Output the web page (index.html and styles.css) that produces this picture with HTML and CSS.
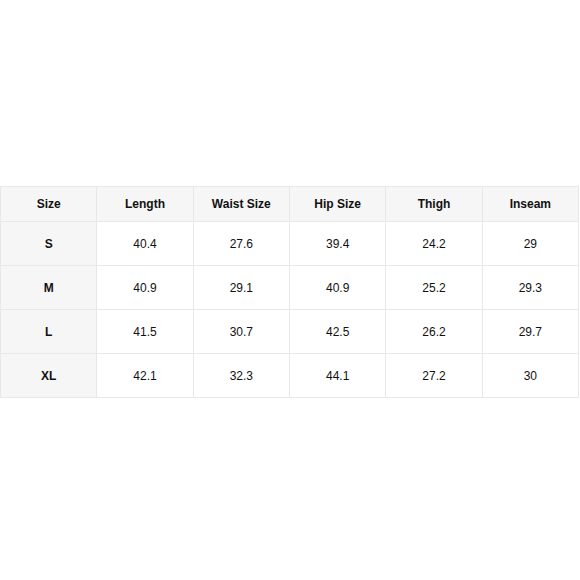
FILE: index.html
```html
<!DOCTYPE html>
<html>
<head>
<meta charset="utf-8">
<link rel="stylesheet" href="styles.css">
</head>
<body>
<div class="page">
<table class="chart">
  <thead>
    <tr><th>Size</th><th>Length</th><th>Waist Size</th><th>Hip Size</th><th>Thigh</th><th>Inseam</th></tr>
  </thead>
  <tbody>
    <tr><th>S</th><td>40.4</td><td>27.6</td><td>39.4</td><td>24.2</td><td>29</td></tr>
    <tr><th>M</th><td>40.9</td><td>29.1</td><td>40.9</td><td>25.2</td><td>29.3</td></tr>
    <tr><th>L</th><td>41.5</td><td>30.7</td><td>42.5</td><td>26.2</td><td>29.7</td></tr>
    <tr><th>XL</th><td>42.1</td><td>32.3</td><td>44.1</td><td>27.2</td><td>30</td></tr>
  </tbody>
</table>
</div>
</body>
</html>
```

FILE: styles.css
```css
html, body {
  margin: 0;
  padding: 0;
  background: #ffffff;
}
.page {
  width: 580px;
  height: 580px;
  padding-top: 186px;
  box-sizing: border-box;
}
.chart {
  width: 579px;
  border-collapse: collapse;
  table-layout: fixed;
  font-family: "Liberation Sans", Arial, sans-serif;
  font-size: 12px;
  color: #111;
}
.chart th, .chart td {
  border: 1px solid #e8e8e8;
  text-align: center;
  padding: 0;
}
.chart thead th {
  height: 34px;
  background: #f6f6f6;
  font-weight: bold;
}
.chart tbody th {
  background: #f6f6f6;
  font-weight: bold;
  height: 43px;
}
.chart tbody td {
  height: 43px;
  background: #fff;
}
```
